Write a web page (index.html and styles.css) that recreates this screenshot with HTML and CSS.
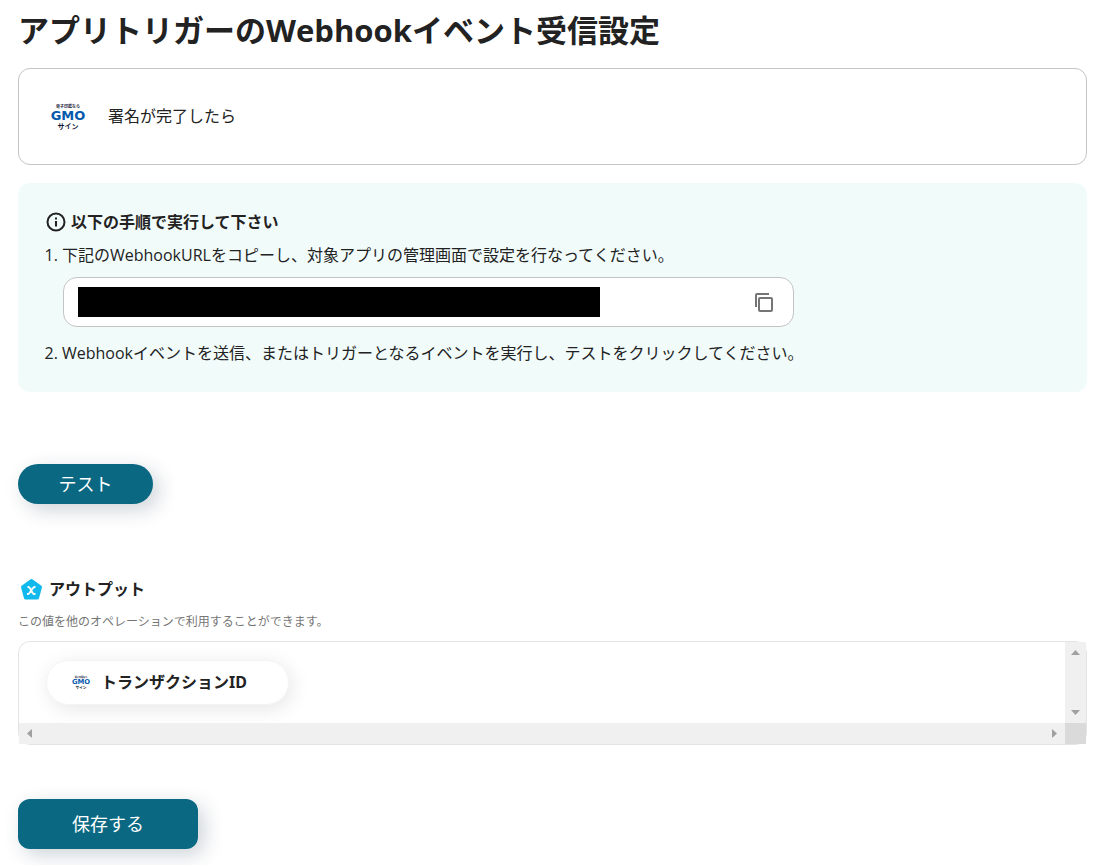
FILE: index.html
```html
<!DOCTYPE html>
<html lang="ja">

<head>
  <meta charset="utf-8">
  <meta name="viewport" content="width=device-width, initial-scale=1">
  <title>アプリトリガーのWebhookイベント受信設定</title>
  <link rel="stylesheet" href="styles.css">
</head>

<body>
  <h1>アプリトリガーのWebhookイベント受信設定</h1>

  <div class="trigger">
    <svg class="logo" viewBox="0 0 38 30" role="img" aria-label="GMOサイン">
      <text class="gmo-small" x="19" y="7">電子印鑑なら</text>
      <text class="gmo-main" x="19" y="19">GMO</text>
      <text class="gmo-sub" x="19" y="28">サイン</text>
    </svg>
    <span>署名が完了したら</span>
  </div>

  <section class="guide">
    <h2>
      <svg width="20" height="20" viewBox="0 0 20 20" fill="none" stroke="#222" stroke-width="2" aria-hidden="true">
        <circle cx="10" cy="10" r="8.5"/>
        <path d="M10 9v5.500M10 5.500v2"/>
      </svg>
      以下の手順で実行して下さい
    </h2>
    <ol>
      <li>
        <label for="url">下記のWebhookURLをコピーし、対象アプリの管理画面で設定を行なってください。</label>
        <div class="url-box">
          <input id="url" type="text" readonly>
          <button class="copy" type="button" aria-label="コピー">
            <svg width="20" height="20" viewBox="0 0 20 20" fill="none" stroke="#757575" stroke-width="2" aria-hidden="true">
              <path d="M2 15V3a1 1 0 0 1 1-1h12"/>
              <rect x="5" y="6" width="13" height="13" rx="1"/>
            </svg>
          </button>
        </div>
      </li>
      <li>Webhookイベントを送信、またはトリガーとなるイベントを実行し、テストをクリックしてください。</li>
    </ol>
  </section>

  <button class="btn test" type="button">テスト</button>

  <section class="output">
    <h2>
      <svg width="26" height="24" viewBox="0 0 26 24" aria-hidden="true">
        <path d="M13.500 3.500 22.500 10 19.500 21h-12L4.500 10Z" fill="#12b9ec" stroke="#12b9ec" stroke-width="3" stroke-linejoin="round"/>
        <path d="M9.500 10h1c2 0 3.500 7 5.500 7h1.500M17.500 10h-1c-2 0-4.500 7-6.500 7H9" fill="none" stroke="#fff" stroke-width="1.800"/>
      </svg>
      アウトプット
    </h2>
    <p>この値を他のオペレーションで利用することができます。</p>

    <div class="scroller">
      <div class="view">
        <div class="chip">
          <svg class="logo" viewBox="0 0 38 30" aria-hidden="true">
            <text class="gmo-small" x="19" y="7">電子印鑑なら</text>
            <text class="gmo-main" x="19" y="19">GMO</text>
            <text class="gmo-sub" x="19" y="28">サイン</text>
          </svg>
          <span>トランザクションID</span>
        </div>
      </div>
      <div class="bar vertical">
        <button type="button" class="arrow up" aria-label="上へ"></button>
        <button type="button" class="arrow down" aria-label="下へ"></button>
      </div>
      <div class="bar">
        <button type="button" class="arrow left" aria-label="左へ"></button>
        <button type="button" class="arrow right" aria-label="右へ"></button>
      </div>
      <div class="corner"></div>
    </div>
  </section>

  <button class="btn save" type="button">保存する</button>
</body>

</html>
```
FILE: styles.css
```css
* {
  box-sizing: border-box;
}
body {
  margin: 0;
  padding: 10px 20px 16px 18px;
  background: #fff;
  color: #222;
  font-family: "Open Sans", "Noto Sans CJK JP", sans-serif;
  font-size: 16px;
  line-height: 24px;
}
button,
input {
  font: inherit;
}
button {
  padding: 0;
  border: 0;
  cursor: pointer;
}
svg {
  flex: none;
}
h1 {
  margin: 0 0 18px;
  font-size: 31px;
  line-height: 40px;
}
h2 {
  display: flex;
  align-items: center;
  gap: 5px;
  margin: 0;
  font-size: 16px;
}

/* logo */
.logo {
  width: 38px;
  height: 30px;
}
.logo text {
  text-anchor: middle;
  font-weight: 700;
}
.gmo-small {
  font-size: 4px;
  fill: #1b2440;
}
.gmo-main {
  font-family: "DejaVu Sans", sans-serif;
  font-size: 13px;
  fill: #0459ac;
}
.gmo-sub {
  font-size: 7px;
  fill: #111a38;
}

.trigger {
  display: flex;
  align-items: center;
  gap: 21px;
  min-height: 97px;
  padding: 0 30px 2px;
  border: 1px solid #c4c4c4;
  border-radius: 12px;
}

.guide {
  margin-top: 18px;
  padding: 27px 28px;
  border-radius: 12px;
  background: #f1fbfa;
}
.guide ol {
  margin: 9px 0 0;
  padding-left: 16px;
}
.url-box {
  display: flex;
  align-items: center;
  justify-content: space-between;
  max-width: 731px;
  height: 50px;
  margin: 10px 0 14px 1px;
  padding: 0 19px 0 14px;
  border: 1px solid #c4c4c4;
  border-radius: 14px;
  background: #fff;
}
.url-box input {
  width: 522px;
  min-width: 0;
  height: 30px;
  border: 0;
  background: #000;
}
.copy {
  display: flex;
  background: none;
}

.btn {
  display: block;
  background: #0a6882;
  color: #fff;
  font-size: 18px;
  box-shadow: 6px 6px 20px rgba(10, 40, 60, 0.2);
}
.test {
  width: 135px;
  height: 40px;
  margin-top: 72px;
  border-radius: 20px;
}
.save {
  width: 180px;
  height: 50px;
  margin-top: 54px;
  border-radius: 12px;
}

.output {
  margin-top: 73px;
}
.output p {
  margin: 13px 0 11px;
  color: #757575;
  font-size: 12px;
  line-height: 16px;
}
.scroller {
  display: grid;
  grid-template-columns: 1fr 21px;
  border: 1px solid #e4e4e4;
  border-radius: 12px;
}
.view {
  padding: 18px 27px;
}
.chip {
  display: inline-flex;
  align-items: center;
  gap: 10px;
  height: 45px;
  padding: 0 41px 2px 24px;
  border: 1px solid #f3f3f3;
  border-radius: 23px;
  box-shadow: 3px 4px 20px rgba(0, 0, 0, 0.1);
  font-family: "Noto Sans", "Noto Sans CJK JP", sans-serif;
  font-weight: 700;
  vertical-align: top;
}
.chip .logo {
  width: 20px;
  height: 16px;
}
.bar {
  display: flex;
  justify-content: space-between;
  background: #f0f0f0;
}
.vertical {
  flex-direction: column;
}
.corner {
  height: 21px;
  background: #dadada;
}
.arrow {
  width: 21px;
  height: 21px;
  background: none;
}
/* 9px wide triangle */
.arrow::before {
  content: "";
  display: block;
  width: 9px;
  height: 5px;
  margin: auto;
  background: #a0a0a0;
  clip-path: polygon(50% 0, 100% 100%, 0 100%);
}
.down::before {
  transform: rotate(180deg);
}
.left::before {
  transform: rotate(270deg);
}
.right::before {
  transform: rotate(90deg);
}
```
